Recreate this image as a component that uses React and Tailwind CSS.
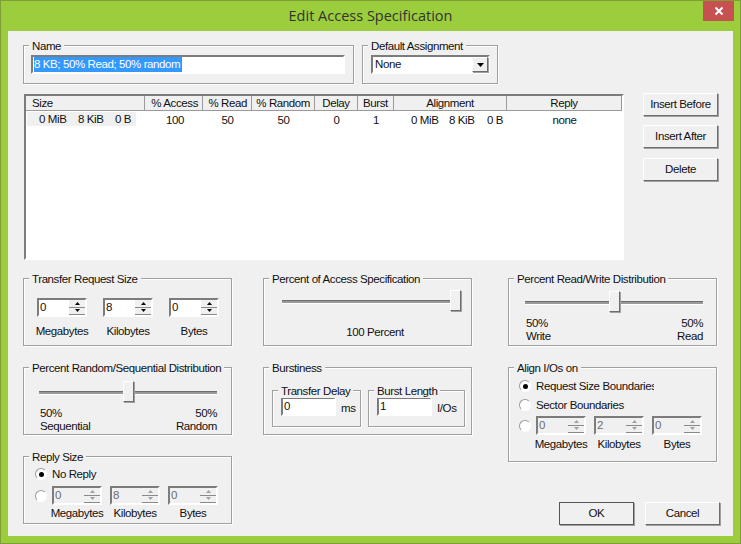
const face = 'bg-[#f0f0f0]';
const sunken = 'border-2 border-t-[#7c7c7c] border-l-[#7c7c7c] border-r-white border-b-white';
const raised = 'border border-t-white border-l-white border-r-[#6d6d6d] border-b-[#6d6d6d] shadow-[1px_1px_0_#a0a0a0]';

const columns = [
  { label: 'Size', w: 'w-[119px]', align: 'text-left pl-[6px]' },
  { label: '% Access', w: 'w-[58px]', align: 'text-right pr-[4px]' },
  { label: '% Read', w: 'w-[49px]', align: 'text-right pr-[4px]' },
  { label: '% Random', w: 'w-[63px]', align: 'text-right pr-[4px]' },
  { label: 'Delay', w: 'w-[43px]', align: 'text-center' },
  { label: 'Burst', w: 'w-[36px]', align: 'text-center' },
  { label: 'Alignment', w: 'w-[113px]', align: 'text-center' },
  { label: 'Reply', w: 'w-[115px]', align: 'text-center' },
];

function Group({ title, className = '', children }) {
  return (
    <div className={`relative border border-[#a0a0a0] shadow-[1px_1px_0_#fff,inset_1px_1px_0_#fff] ${className}`}>
      <span className={`absolute -top-[7px] left-[5px] ${face} px-[3px] leading-[14px] whitespace-nowrap`}>{title}</span>
      {children}
    </div>
  );
}

function Arrow({ up, color }) {
  return (
    <svg width="5" height="3" viewBox="0 0 5 3" fill={color}>
      <path d={up ? 'M2.5 0L5 3H0Z' : 'M0 0H5L2.5 3Z'} />
    </svg>
  );
}

function Spinner({ value, disabled }) {
  const color = disabled ? '#a0a0a0' : '#000';
  return (
    <div className={`w-[50px] h-[19px] flex ${sunken} ${disabled ? face : 'bg-white'}`}>
      <span className={`flex-1 pl-[1px] leading-[15px] ${disabled ? 'text-[#6d6d6d]' : ''}`}>{value}</span>
      <div className="w-[16px] flex flex-col">
        <div className={`flex-1 flex items-center justify-center ${face} border-b border-[#8a8a8a]`}><Arrow up color={color} /></div>
        <div className={`flex-1 flex items-center justify-center ${face} border-b border-[#8a8a8a]`}><Arrow color={color} /></div>
      </div>
    </div>
  );
}

function Radio({ checked }) {
  return (
    <span className="w-[12px] h-[12px] shrink-0 rounded-full bg-white border border-t-[#9a9a9a] border-l-[#9a9a9a] border-r-white border-b-white flex items-center justify-center">
      {checked && <span className="w-[5px] h-[5px] rounded-full bg-black" />}
    </span>
  );
}

function Button({ children, strong, className = '' }) {
  return (
    <div className={`w-[75px] h-[23px] flex items-center justify-center ${strong ? 'outline outline-1 -outline-offset-1 outline-[#555]' : ''} ${raised} ${className}`}>
      {children}
    </div>
  );
}

function Slider({ left, width = 178 }) {
  return (
    <div className="relative h-[22px] flex items-center" style={{ width }}>
      <div className="w-full h-[3px] bg-[#9a9a9a] border-t border-[#6d6d6d] shadow-[0_1px_0_#fff]" />
      <div className={`absolute top-0 w-[11px] h-[21px] ${face} ${raised}`} style={{ left }} />
    </div>
  );
}

function SizeRow({ values, disabled, labelsClass, gapClass }) {
  return (
    <div>
      <div className={`flex ${gapClass}`}>
        {values.map((v, i) => <Spinner key={i} value={v} disabled={disabled} />)}
      </div>
      <div className={`flex ${gapClass} ${labelsClass}`}>
        {['Megabytes', 'Kilobytes', 'Bytes'].map(l => (
          <span key={l} className="w-[50px] whitespace-nowrap flex justify-center">{l}</span>
        ))}
      </div>
    </div>
  );
}

function SpecList() {
  return (
    <div className={`w-[600px] h-[166px] bg-white ${sunken}`}>
      <div className={`flex h-[15px] ${face}`}>
        {columns.map(c => (
          <div key={c.label} className={`${c.w} ${c.align} leading-[14px] border-r border-b border-[#9a9a9a] whitespace-nowrap`}>{c.label}</div>
        ))}
      </div>
      <div className="flex h-[16px] leading-[16px] mt-[1px]">
        <div className="w-[119px] pl-[1px]">
          <div className={`w-[109px] h-[14px] leading-[14px] ${face} flex pl-[12px]`}>
            <span className="w-[39px]">0 MiB</span>
            <span className="w-[37px]">8 KiB</span>
            <span>0 B</span>
          </div>
        </div>
        <div className="w-[58px] text-center pl-[2px]">100</div>
        <div className="w-[49px] text-center">50</div>
        <div className="w-[63px] text-center">50</div>
        <div className="w-[43px] text-center">0</div>
        <div className="w-[36px] text-center">1</div>
        <div className="w-[113px] flex pl-[17px]">
          <span className="w-[38px]">0 MiB</span>
          <span className="w-[38px]">8 KiB</span>
          <span>0 B</span>
        </div>
        <div className="w-[115px] text-center">none</div>
      </div>
    </div>
  );
}

export default function App() {
  return (
    <div className="relative w-[741px] h-[544px] bg-[#9bcd3c] border border-[#7d9f35] text-[11.5px] tracking-[-0.4px] text-[#111] font-['Liberation_Sans',Arial,sans-serif] overflow-hidden">
      <div className="h-[30px] flex items-center justify-center text-[14.5px] tracking-normal text-[#333] font-['Open_Sans',sans-serif]">
        Edit Access Specification
      </div>
      <div className="absolute top-0 right-[6px] w-[31px] h-[20px] bg-[#c75050] flex items-center justify-center">
        <svg width="10" height="10" viewBox="0 0 10 10" stroke="#fff" strokeWidth="2">
          <path d="M1.5 1.5L8.5 8.5M8.5 1.5L1.5 8.5" />
        </svg>
      </div>

      <div className={`mx-[7px] w-[725px] h-[505px] ${face} pl-[15px] pt-[14px]`}>
        <div className="flex gap-[8px]">
          <Group title="Name" className="w-[331px] h-[39px] pl-[7px] pt-[9px]">
            <div className={`w-[314px] h-[19px] bg-white ${sunken} flex items-center pl-[1px]`}>
              <span className="bg-[#3399ff] text-white leading-[15px] pr-[1px] border-r border-[#d96a00]">8 KB; 50% Read; 50% random</span>
            </div>
          </Group>
          <Group title="Default Assignment" className="w-[136px] h-[39px] pl-[8px] pt-[9px]">
            <div className={`w-[119px] h-[19px] bg-white ${sunken} flex items-center justify-between pl-[2px]`}>
              None
              <div className={`w-[16px] h-[15px] ${face} ${raised} flex items-center justify-center`}>
                <svg width="7" height="4" viewBox="0 0 7 4"><path d="M0 0H7L3.5 4Z" /></svg>
              </div>
            </div>
          </Group>
        </div>

        <div className="flex mt-[10px] pl-[1px]">
          <SpecList />
          <div className="ml-[19px] -mt-[1px] flex flex-col">
            <Button>Insert Before</Button>
            <Button className="mt-[9px]">Insert After</Button>
            <Button className="mt-[10px]">Delete</Button>
          </div>
        </div>

        <div className="flex mt-[18px]">
          <div className="w-[209px] flex flex-col gap-[21px]">
            <Group title="Transfer Request Size" className="h-[68px] pl-[13px] pt-[19px]">
              <SizeRow values={['0', '8', '0']} gapClass="gap-[16px]" labelsClass="mt-[7px] leading-[14px]" />
            </Group>
            <Group title="Percent Random/Sequential Distribution" className="h-[68px] pl-[15px] pt-[13px]">
              <Slider left={84} />
              <div className="flex justify-between w-[178px] leading-[13px] mt-[4px] pl-[1px]">
                <span>50%<br />Sequential</span>
                <span className="text-right">50%<br />Random</span>
              </div>
            </Group>
            <Group title="Reply Size" className="h-[68px] pl-[11px] pt-[10px]">
              <div className="flex items-center gap-[5px] h-[14px] leading-[14px]"><Radio checked />No Reply</div>
              <div className="flex gap-[5px] mt-[5px]">
                <div className="h-[19px] flex items-center"><Radio /></div>
                <SizeRow values={['0', '8', '0']} disabled gapClass="gap-[8px]" labelsClass="leading-[14px] mt-[1px]" />
              </div>
            </Group>
          </div>

          <div className="w-[209px] ml-[31px] flex flex-col gap-[21px]">
            <Group title="Percent of Access Specification" className="h-[68px] pl-[18px] pt-[11px]">
              <Slider left={168} />
              <div className="w-[178px] text-center mt-[13px] leading-[14px] pl-[8px]">100 Percent</div>
            </Group>
            <Group title="Burstiness" className="h-[68px] pl-[8px] pt-[22px] flex gap-[7px]">
              <Group title="Transfer Delay" className="w-[89px] h-[37px] pl-[8px] pt-[6px] flex">
                <div className={`w-[55px] h-[19px] bg-white ${sunken} pl-[1px] leading-[15px]`}>0</div>
                <span className="ml-[5px] mt-[4px] leading-[14px]">ms</span>
              </Group>
              <Group title="Burst Length" className="w-[97px] h-[37px] pl-[8px] pt-[6px] flex">
                <div className={`w-[55px] h-[19px] bg-white ${sunken} pl-[1px] leading-[15px]`}>1</div>
                <span className="ml-[5px] mt-[4px] leading-[14px]">I/Os</span>
              </Group>
            </Group>
          </div>

          <div className="w-[209px] ml-[36px] flex flex-col">
            <Group title="Percent Read/Write Distribution" className="h-[68px] pl-[16px] pt-[12px]">
              <Slider left={84} />
              <div className="flex justify-between w-[178px] leading-[13px] mt-[4px] pl-[1px]">
                <span>50%<br />Write</span>
                <span className="text-right">50%<br />Read</span>
              </div>
            </Group>
            <Group title="Align I/Os on" className="mt-[21px] h-[95px] pl-[10px] pt-[11px]">
              <div className="flex items-center gap-[5px] h-[14px] leading-[14px]">
                <Radio checked />
                <span className="w-[118px] overflow-hidden whitespace-nowrap">Request Size Boundaries</span>
              </div>
              <div className="flex items-center gap-[5px] h-[14px] leading-[14px] mt-[5px]"><Radio />Sector Boundaries</div>
              <div className="flex gap-[5px] mt-[4px]">
                <div className="h-[19px] flex items-center"><Radio /></div>
                <SizeRow values={['0', '2', '0']} disabled gapClass="gap-[8px]" labelsClass="leading-[14px] mt-[2px]" />
              </div>
            </Group>
            <div className="flex gap-[11px] justify-end -mr-[3px] mt-[40px]">
              <Button strong>OK</Button>
              <Button>Cancel</Button>
            </div>
          </div>
        </div>
      </div>
    </div>
  );
}
